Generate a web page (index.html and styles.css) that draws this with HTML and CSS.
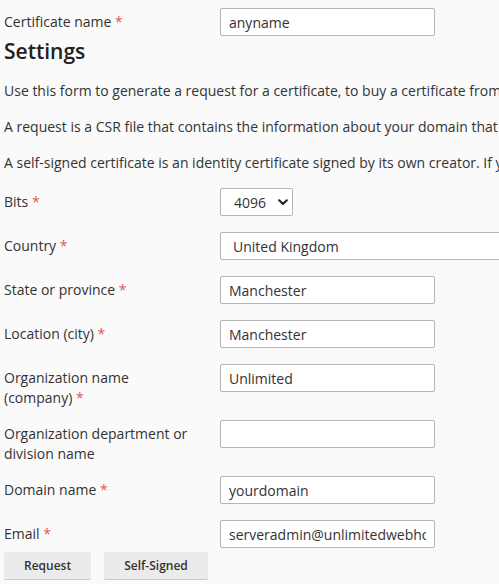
FILE: index.html
```html
<!DOCTYPE html>
<html lang="en">
<head>
<meta charset="utf-8">
<title>Certificate</title>
<link rel="stylesheet" href="styles.css">
</head>
<body>
<div class="page">
  <div class="row row-first">
    <label class="lbl" for="cn">Certificate name <span class="req">*</span></label>
    <div class="field"><input id="cn" class="txt" type="text" value="anyname"></div>
  </div>
  <h2 class="title">Settings</h2>
  <p class="desc">Use this form to generate a request for a certificate, to buy a certificate from a certificate authority, or to generate a self-signed certificate.</p>
  <p class="desc">A request is a CSR file that contains the information about your domain that you specify in the form.</p>
  <p class="desc">A self-signed certificate is an identity certificate signed by its own creator. If you use it, visitors will see a warning.</p>

  <div class="row">
    <label class="lbl" for="bits">Bits <span class="req">*</span></label>
    <div class="field">
      <div class="sel sel-bits">
        <select id="bits"><option>4096</option></select>
        <svg class="chev" width="10" height="7" viewBox="0 0 10 7"><path d="M1.2 1.3 L5 5 L8.8 1.3" fill="none" stroke="#222" stroke-width="2.1" stroke-linecap="round" stroke-linejoin="round"/></svg>
      </div>
    </div>
  </div>
  <div class="row">
    <label class="lbl" for="country">Country <span class="req">*</span></label>
    <div class="field">
      <div class="sel sel-country">
        <select id="country"><option>United Kingdom</option></select>
      </div>
    </div>
  </div>
  <div class="row">
    <label class="lbl" for="state">State or province <span class="req">*</span></label>
    <div class="field"><input id="state" class="txt" type="text" value="Manchester"></div>
  </div>
  <div class="row">
    <label class="lbl" for="city">Location (city) <span class="req">*</span></label>
    <div class="field"><input id="city" class="txt" type="text" value="Manchester"></div>
  </div>
  <div class="row">
    <label class="lbl" for="org">Organization name (company) <span class="req">*</span></label>
    <div class="field"><input id="org" class="txt" type="text" value="Unlimited"></div>
  </div>
  <div class="row">
    <label class="lbl" for="dept">Organization department or division name</label>
    <div class="field"><input id="dept" class="txt" type="text" value=""></div>
  </div>
  <div class="row">
    <label class="lbl" for="dom">Domain name <span class="req">*</span></label>
    <div class="field"><input id="dom" class="txt" type="text" value="yourdomain"></div>
  </div>
  <div class="row row-last">
    <label class="lbl" for="mail">Email <span class="req">*</span></label>
    <div class="field"><input id="mail" class="txt" type="text" value="serveradmin@unlimitedwebhosting.co.uk"></div>
  </div>
  <div class="actions">
    <button class="btn" type="button">Request</button>
    <button class="btn" type="button">Self-Signed</button>
  </div>
</div>
</body>
</html>
```
FILE: styles.css
```css
html {
  overflow: hidden;
}
body {
  margin: 0;
  background: #fafafa;
  font-family: "Open Sans", "Liberation Sans", sans-serif;
  font-size: 14px;
  line-height: 20px;
  color: #333;
}
.page {
  padding: 0 4px;
  width: 900px;
}
.row {
  display: grid;
  grid-template-columns: 216px auto;
  margin-bottom: 12px;
}
.row-first {
  padding-top: 8px;
  margin-bottom: 2px;
}
.row-first .field {
  min-height: 28px;
}
.row-last {
  margin-bottom: 0;
}
.row-last .field {
  min-height: 28px;
}
.lbl {
  padding-top: 4px;
  width: 190px;
  line-height: 20px;
}
.req {
  color: #e0575b;
}
.field {
  min-height: 32px;
  display: flex;
  align-items: flex-start;
}
.txt {
  box-sizing: border-box;
  width: 215px;
  height: 28px;
  margin: 0;
  padding: 0 8px;
  border: 1px solid #b5b5b5;
  border-radius: 2px;
  background: #fff;
  font-family: "Open Sans", "Liberation Sans", sans-serif;
  font-size: 14px;
  color: #333;
  outline: none;
}
.title {
  margin: 0 0 17px;
  font-size: 21px;
  line-height: 26px;
  font-weight: 600;
  color: #222;
}
.desc {
  margin: 0 0 16px;
  white-space: nowrap;
  color: #333;
}
.desc:last-of-type {
  margin-bottom: 15px;
}
.sel {
  position: relative;
}
.sel select {
  -webkit-appearance: none;
  appearance: none;
  box-sizing: border-box;
  height: 28px;
  margin: 0;
  border: 1px solid #b5b5b5;
  border-radius: 2px;
  background: #fff;
  font-family: "Open Sans", "Liberation Sans", sans-serif;
  font-size: 14px;
  color: #333;
  outline: none;
}
.sel-bits select {
  width: 73px;
  padding: 0 0 0 13px;
}
.sel-country select {
  width: 330px;
  padding: 0 0 0 12px;
}
.chev {
  position: absolute;
  left: 58px;
  top: 11px;
  pointer-events: none;
}
.actions {
  display: flex;
  gap: 13px;
  margin-top: 4px;
}
.btn {
  box-sizing: border-box;
  height: 28px;
  padding: 0 20px;
  margin: 0;
  border: 0;
  border-bottom: 1px solid #c9c9c9;
  border-radius: 2px;
  background: #ebebeb;
  font-family: "Open Sans", "Liberation Sans", sans-serif;
  font-size: 12px;
  font-weight: 600;
  color: #333;
}
.btn:first-child {
  width: 87px;
}
.btn:last-child {
  width: 104px;
}
```
